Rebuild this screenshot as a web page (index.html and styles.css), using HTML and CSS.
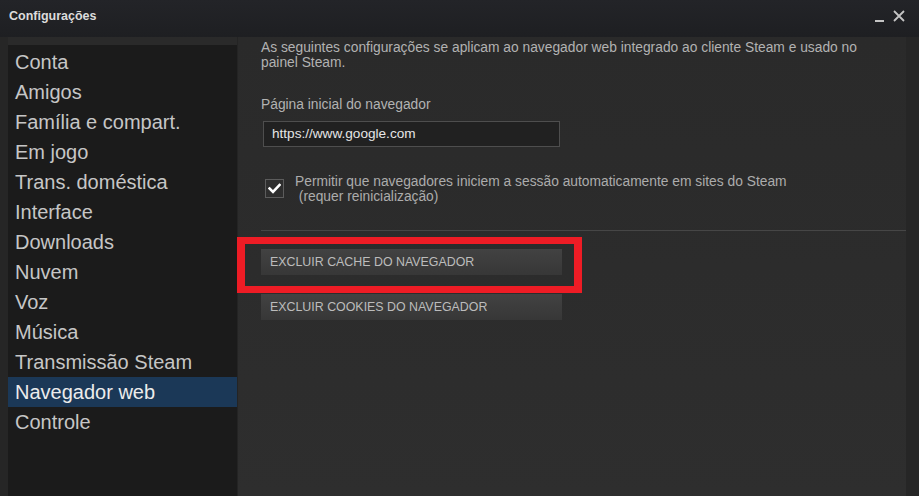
FILE: index.html
```html
<!DOCTYPE html>
<html lang="pt-BR">
<head>
<meta charset="utf-8">
<title>Configurações</title>
<link rel="stylesheet" href="styles.css">
</head>
<body>
<div class="window">
  <div class="titlebar">
    <div class="title">Configurações</div>
    <div class="controls">
      <span class="ctl-min"></span>
      <svg class="ctl-close" width="12" height="12" viewBox="0 0 12 12"><path d="M1 1 L11 11 M11 1 L1 11" stroke="#c4c4c4" stroke-width="1.8" fill="none"/></svg>
    </div>
  </div>
  <div class="main">
    <nav class="sidebar">
      <div class="side-strip"></div>
      <ul class="menu">
        <li>Conta</li>
        <li>Amigos</li>
        <li>Família e compart.</li>
        <li>Em jogo</li>
        <li>Trans. doméstica</li>
        <li>Interface</li>
        <li>Downloads</li>
        <li>Nuvem</li>
        <li>Voz</li>
        <li>Música</li>
        <li>Transmissão Steam</li>
        <li class="active">Navegador web</li>
        <li>Controle</li>
      </ul>
    </nav>
    <section class="content">
      <p class="intro">As seguintes configurações se aplicam ao navegador web integrado ao cliente Steam e usado no painel Steam.</p>
      <div class="field-label">Página inicial do navegador</div>
      <div class="input">https://www.google.com</div>
      <div class="check-row">
        <span class="checkbox">
          <svg width="13" height="11" viewBox="0 0 13 11"><path d="M1.5 5.5 L5 9 L11.5 2" stroke="#ffffff" stroke-width="2.6" fill="none" stroke-linecap="square"/></svg>
        </span>
        <div class="check-label">Permitir que navegadores iniciem a sessão automaticamente em sites do Steam<br>&nbsp;(requer reinicialização)</div>
      </div>
      <hr class="sep">
      <div class="buttons">
        <div class="btn">EXCLUIR CACHE DO NAVEGADOR</div>
        <div class="btn">EXCLUIR COOKIES DO NAVEGADOR</div>
        <div class="highlight"></div>
      </div>
    </section>
    <div class="scroll-gutter"></div>
  </div>
</div>
</body>
</html>
```
FILE: styles.css
```css
html, body {
  margin: 0;
  padding: 0;
  height: 100%;
  background: #262626;
  overflow: hidden;
}
.window {
  display: flex;
  flex-direction: column;
  height: 496px;
  font-family: "Liberation Sans", Arial, sans-serif;
}
.titlebar {
  height: 37px;
  flex: none;
  display: flex;
  align-items: center;
  justify-content: space-between;
  background: linear-gradient(#232428, #1e1f22);
}
.title {
  padding-left: 9px;
  padding-bottom: 5px;
  font-size: 12.5px;
  font-weight: bold;
  color: #dcdcdc;
}
.controls {
  display: flex;
  align-items: flex-end;
  gap: 9px;
  padding-right: 14px;
  padding-bottom: 6px;
}
.ctl-min {
  display: block;
  width: 9px;
  height: 2px;
  background: #c4c4c4;
}
.ctl-close {
  display: block;
}
.main {
  flex: 1;
  display: flex;
  min-height: 0;
}
.sidebar {
  width: 229px;
  margin-left: 8px;
  flex: none;
  background: #1b1b1b;
  display: flex;
  flex-direction: column;
}
.side-strip {
  height: 8px;
  background: #2a2a2a;
}
.menu {
  list-style: none;
  margin: 2px 0 0;
  padding: 0;
}
.menu li {
  height: 30px;
  line-height: 30px;
  padding-left: 7px;
  font-size: 20px;
  color: #c6c6c6;
  white-space: nowrap;
}
.menu li.active {
  background: #1b3857;
  color: #ececec;
}
.content {
  flex: 1;
  background: linear-gradient(#2a2a2a, #2e2e2e);
  border-left: 1px solid #242424;
  padding: 3px 0 0 23px;
  min-width: 0;
}
.intro {
  margin: 0;
  width: 620px;
  font-size: 13.8px;
  line-height: 15px;
  color: #b2b2b2;
}
.field-label {
  margin-top: 27px;
  font-size: 13.8px;
  line-height: 16px;
  color: #b2b2b2;
}
.input {
  margin-top: 8px;
  margin-left: 2px;
  width: 287px;
  height: 24px;
  line-height: 24px;
  padding-left: 8px;
  border: 1px solid #4e4e4e;
  background: #212121;
  font-size: 13.6px;
  color: #e6e6e6;
}
.check-row {
  display: flex;
  align-items: flex-start;
  margin-top: 27px;
  margin-left: 4px;
  gap: 11px;
}
.checkbox {
  width: 17px;
  height: 17px;
  margin-top: 5px;
  border: 1px solid #5c5c5c;
  background: #2e2e2e;
  display: flex;
  align-items: center;
  justify-content: center;
  flex: none;
}
.check-label {
  font-size: 13.8px;
  line-height: 15px;
  color: #acacac;
}
.sep {
  margin: 26px 0 0 0;
  border: none;
  height: 1px;
  background: #464646;
}
.buttons {
  position: relative;
  margin-top: 18px;
  display: flex;
  flex-direction: column;
  gap: 19px;
}
.btn {
  width: 292px;
  height: 26px;
  line-height: 26px;
  padding-left: 9px;
  background: linear-gradient(#424242, #373737);
  font-size: 12.4px;
  color: #bcbcbc;
}
.highlight {
  position: absolute;
  left: -24px;
  top: -12px;
  width: 329px;
  height: 42px;
  border: 7px solid #ee1c25;
  border-left-width: 8px;
  border-right-width: 8px;
}
.scroll-gutter {
  width: 13px;
  flex: none;
  background: #262626;
}
```
